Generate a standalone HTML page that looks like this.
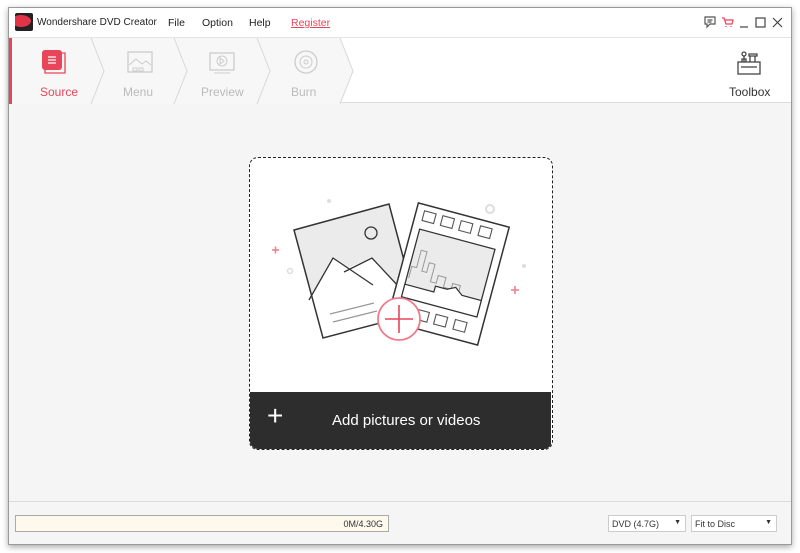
<!DOCTYPE html>
<html><head><meta charset="utf-8"><style>
*{margin:0;padding:0;box-sizing:border-box}
body{width:800px;height:553px;background:#fff;position:relative;overflow:hidden;font-family:"Liberation Sans",sans-serif}
.win{position:absolute;left:8px;top:7px;width:784px;height:538px;background:#f5f5f5;border:1px solid #9a9a9a;box-shadow:0 2px 6px rgba(0,0,0,.35)}
.title{position:absolute;left:0;top:0;width:782px;height:29px;background:#fff;font-size:10.5px;color:#222}
.title span{position:absolute;top:9px}
.tabs{position:absolute;left:0;top:29px;width:782px;height:66px;background:#fff;border-top:1px solid #e4e4e4;border-bottom:1px solid #dcdcdc}
.lbl{position:absolute;top:47px;font-size:12px;color:#bbb}
.foot{position:absolute;left:0;top:493px;width:782px;height:43px;border-top:1px solid #ddd;background:#f5f5f5}
</style></head><body>
<div class="win">
 <div class="title">
  <div style="position:absolute;left:6px;top:5px;width:18px;height:18px;background:#222;border-radius:2px;overflow:hidden"><div style="position:absolute;left:-4px;top:2px;width:20px;height:12px;background:#e03448;border-radius:50%"></div></div>
  <span style="left:28px;font-size:10px">Wondershare DVD Creator</span>
  <span style="left:159px">File</span><span style="left:193px">Option</span><span style="left:240px">Help</span>
  <span style="left:282px;color:#e8455a;text-decoration:underline">Register</span>
  <svg style="position:absolute;left:695px;top:8px" width="82" height="14" viewBox="0 0 82 14" fill="none" stroke-width="1.2">
   <path d="M1 1h10v7H6l-3 3V8H1z" stroke="#555"/><path d="M3.5 4h5M3.5 6h4" stroke="#555"/>
   <path d="M18 2h2l2 6h6l1-4h-8M22 10v1M27 10v1" stroke="#e8455a"/>
   <path d="M36 11h8" stroke="#444"/>
   <rect x="52" y="2" width="9" height="9" stroke="#444"/>
   <path d="M69 2l9 9M78 2l-9 9" stroke="#444"/>
  </svg>
 </div>
 <div class="tabs">
  <svg style="position:absolute;left:0;top:0" width="360" height="66" fill="none" stroke="#d8d8d8">
   <path d="M0 0h331l13 33-13 33H0z" fill="#f7f7f7" stroke="none"/>
   <path d="M82 0l13 33-13 33M165 0l13 33-13 33M248 0l13 33-13 33M331 0l13 33-13 33"/>
   <rect x="0" y="0" width="3" height="66" fill="#e8455a" stroke="none"/>
   <rect x="33" y="12" width="20" height="20" rx="3" fill="#e8455a" stroke="none"/>
   <path d="M36 32v3h20V15h-3" stroke="#e8455a" stroke-width="1.3"/>
   <path d="M39 19h8M39 22h8M39 25h8" stroke="#fff" stroke-width="1.3"/>
   <rect x="119" y="14" width="24" height="20" stroke="#ccc" stroke-width="1.3"/>
   <path d="M120 27l7-6 6 5 4-3 5 4M124 30h4v3h-4zM130 30h4v3h-4z" stroke="#ccc"/>
   <rect x="201" y="15" width="24" height="17" stroke="#ccc" stroke-width="1.3"/><circle cx="213" cy="23" r="5" stroke="#ccc"/><path d="M211 20v6l4-3z M205 35h16" stroke="#ccc"/>
   <circle cx="297" cy="24" r="11" stroke="#ccc" stroke-width="1.3"/><circle cx="297" cy="24" r="6" stroke="#ccc"/><circle cx="297" cy="24" r="2" stroke="#ccc"/>
  </svg>
  <div class="lbl" style="left:31px;color:#e8455a">Source</div>
  <div class="lbl" style="left:114px">Menu</div>
  <div class="lbl" style="left:192px">Preview</div>
  <div class="lbl" style="left:282px">Burn</div>
  <svg style="position:absolute;left:727px;top:12px" width="26" height="26" fill="none" stroke="#444" stroke-width="1.3">
   <rect x="2" y="12" width="22" height="12"/><path d="M5 17h16"/><circle cx="8" cy="4" r="2"/><path d="M8 6v6M6 12v-3h4v3M14 12V6M13 6h8v-2h-8z M19 6v6"/>
  </svg>
  <div style="position:absolute;left:720px;top:47px;font-size:12px;color:#333">Toolbox</div>
 </div>
 <div style="position:absolute;left:240px;top:149px;width:304px;height:293px;border:1.5px dashed #222;border-radius:9px;background:#fff;overflow:hidden">
  <svg style="position:absolute;left:-1px;top:-1px" width="304" height="235" viewBox="249 157 304 235" fill="none">
   <circle cx="329" cy="201" r="2" fill="#ddd"/><circle cx="490" cy="209" r="4" stroke="#ddd" stroke-width="2"/>
   <circle cx="290" cy="271" r="2.5" stroke="#ddd" stroke-width="1.5"/><circle cx="524" cy="266" r="2" fill="#ddd"/>
   <path d="M272 250h7M275.5 246.5v7M511 290h8M515 286v8" stroke="#f07a8c" stroke-width="1.5"/>
   <polygon points="294,230 389,204 418,313 323,338" fill="#ebebeb"/>
   <polygon points="309,300 333,258 348,268 372,258 400,288 418,313 323,338" fill="#fff"/>
   <path d="M309 300l24-42 40 27M344 272l28-14 28 30" stroke="#333" stroke-width="1.3"/>
   <polygon points="294,230 389,204 418,313 323,338" stroke="#333" stroke-width="1.5"/>
   <circle cx="371" cy="233" r="6" stroke="#333" stroke-width="1.3"/>
   <path d="M330 314l44-11M333 322l44-11" stroke="#999" stroke-width="1.3"/>
   <g transform="translate(-13 3) rotate(15 461 271)">
    <rect x="414" y="210" width="94" height="122" fill="#fff" stroke="#333" stroke-width="1.5"/>
    <rect x="422" y="235" width="78" height="70" fill="#ebebeb" stroke="#333" stroke-width="1.3"/>
    <g stroke="#555" stroke-width="1.1"><rect x="422" y="216" width="12" height="10"/><rect x="441" y="216" width="12" height="10"/><rect x="460" y="216" width="12" height="10"/><rect x="480" y="216" width="12" height="10"/>
    <rect x="422" y="313" width="12" height="10"/><rect x="441" y="313" width="12" height="10"/><rect x="460" y="313" width="12" height="10"/><rect x="480" y="313" width="12" height="10"/></g>
    <path d="M424 285v-12h5v-18h6v20h5v-10h6v18h6v-8h8v10h8v-6h8v12h8" stroke="#999" stroke-width="1"/>
    <path d="M422 292h30v-6h12l8-4 8 6h20v17h-78z" fill="#fff" stroke="#333" stroke-width="1.2"/>
   </g>
   <circle cx="399" cy="319" r="21" fill="#fff" stroke="#f07a8c" stroke-width="1.8"/>
   <path d="M385 319h28M399 305v28" stroke="#e8455a" stroke-width="1.6"/>
  </svg>
  <div style="position:absolute;left:0;bottom:0;width:301px;height:57px;background:#2d2d2d;color:#fff;font-size:15px">
   <div style="position:absolute;left:17px;top:10px;font-size:28px;font-weight:200;line-height:28px">+</div>
   <div style="position:absolute;left:82px;top:20px">Add pictures or videos</div>
  </div>
 </div>
 <div class="foot">
  <div style="position:absolute;left:6px;top:13px;width:374px;height:17px;background:#fdf9ec;border:1px solid #aaa;font-size:9px;text-align:right;padding:3px 5px 0 0;color:#333">0M/4.30G</div>
  <div style="position:absolute;left:599px;top:13px;width:78px;height:17px;background:#fff;border:1px solid #ccc;font-size:9px;padding:3px 0 0 3px;color:#333">DVD (4.7G)<span style="position:absolute;right:4px;top:3px;font-size:7px">▼</span></div>
  <div style="position:absolute;left:682px;top:13px;width:86px;height:17px;background:#fff;border:1px solid #ccc;font-size:9px;padding:3px 0 0 3px;color:#333">Fit to Disc<span style="position:absolute;right:4px;top:3px;font-size:7px">▼</span></div>
 </div>
</div>
</body></html>
